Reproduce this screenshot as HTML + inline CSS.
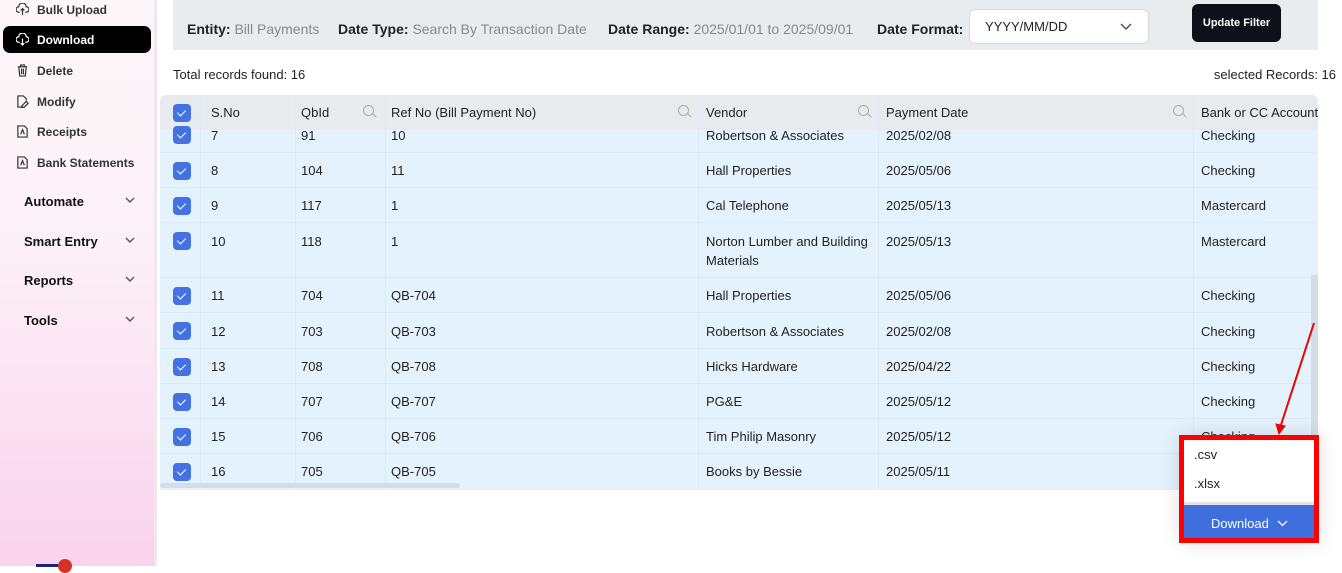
<!DOCTYPE html>
<html><head><style>
*{box-sizing:border-box;margin:0;padding:0}
body{width:1342px;height:566px;overflow:hidden;position:relative;background:#fff;font-family:"Liberation Sans",Arial,sans-serif;font-size:13px;color:#222}
.sb{position:absolute;left:0;top:0;width:157px;height:566px;background:linear-gradient(180deg,#fdf6f9 0%,#fdf2f8 40%,#f9d3ec 100%);border-right:3px solid #f3e6ee}
.nav{position:absolute;left:37px;font-size:12px;font-weight:bold;color:#333}
.ic{position:absolute;left:16px;width:13px;height:13px}
.act{position:absolute;left:3px;top:26px;width:148px;height:27px;background:#000;border-radius:7px}
.grp{position:absolute;left:24px;font-size:13px;font-weight:bold;color:#111}
.chev{position:absolute;left:125px;width:10px;height:6px}
.fb{position:absolute;left:173px;top:0;width:1145px;height:50px;background:#e9ecef}
.fb span{position:absolute;top:21px;font-size:14px}
.fb b{color:#222}
.fb i{font-style:normal;color:#888}
.sel{position:absolute;left:969px;top:9px;width:180px;height:35px;background:#fff;border:1px solid #d8d8d8;border-radius:6px;font-size:13px;padding:9px 15px}
.btn{position:absolute;left:1192px;top:4px;width:89px;height:38px;background:#0e1117;border-radius:6px;color:#fff;font-size:11px;font-weight:bold;text-align:center;line-height:38px}
.tbl{position:absolute;left:160px;top:95px;width:1158px;height:395px;background:#e3f2fd;overflow:hidden;border-radius:6px 6px 0 0}
.hd{position:absolute;left:0;top:0;width:1158px;height:35px;background:#e8ebee}
.row{position:absolute;left:0;width:1158px;border-bottom:1px solid #d9e9f5}
.c{position:absolute;font-size:13px;color:#222;white-space:nowrap}
.cb{position:absolute;left:13px;width:18px;height:18px;background:#4472e3;border-radius:4px}
.cb:after{content:"";position:absolute;left:6px;top:4px;width:4px;height:7px;border:solid #fff;border-width:0 1.5px 1.5px 0;transform:rotate(45deg)}
.vl{position:absolute;top:0;width:1px;height:395px;background:#dde9f3}
.mg{position:absolute;top:10px;width:11px;height:11px;border:1.3px solid #aaa;border-radius:50%}
.mg:after{content:"";position:absolute;left:8px;top:9px;width:5px;height:1.3px;background:#aaa;transform:rotate(45deg)}
</style></head><body>
<div class="sb">
<div class="act"></div>
<svg class="ic" style="top:3px" viewBox="0 0 14 14" fill="none" stroke="#333" stroke-width="1.3"><path d="M4 10H3a3 3 0 010-6 4 4 0 018 0 3 3 0 010 6h-1M7 13V6M5 8l2-2 2 2"/></svg>
<div class="nav" style="top:3px">Bulk Upload</div>
<svg class="ic" style="top:33px" viewBox="0 0 14 14" fill="none" stroke="#fff" stroke-width="1.3"><path d="M4 10H3a3 3 0 010-6 4 4 0 018 0 3 3 0 010 6h-1M7 6v7M5 11l2 2 2-2"/></svg>
<div class="nav" style="top:33px;color:#fff">Download</div>
<svg class="ic" style="top:64px" viewBox="0 0 14 14" fill="none" stroke="#333" stroke-width="1.3"><path d="M2 3h10M5 3V1h4v2M3 3l1 10h6l1-10M6 5v6M8 5v6"/></svg>
<div class="nav" style="top:64px">Delete</div>
<svg class="ic" style="top:95px" viewBox="0 0 14 14" fill="none" stroke="#333" stroke-width="1.3"><path d="M8 13H2V1h6l3 3v2M6 12l5-5 2 2-5 5H6z"/></svg>
<div class="nav" style="top:95px">Modify</div>
<svg class="ic" style="top:125px" viewBox="0 0 14 14" fill="none" stroke="#333" stroke-width="1.3"><path d="M2 1h7l3 3v9H2zM5 10l2-5 2 5"/></svg>
<div class="nav" style="top:125px">Receipts</div>
<svg class="ic" style="top:156px" viewBox="0 0 14 14" fill="none" stroke="#333" stroke-width="1.3"><path d="M2 1h7l3 3v9H2zM5 10l2-5 2 5"/></svg>
<div class="nav" style="top:156px">Bank Statements</div>
<div class="grp" style="top:194px">Automate</div><svg class="chev" style="top:197px" viewBox="0 0 10 6"><path d="M1 1l4 4 4-4" fill="none" stroke="#555" stroke-width="1.4"/></svg>
<div class="grp" style="top:234px">Smart Entry</div><svg class="chev" style="top:237px" viewBox="0 0 10 6"><path d="M1 1l4 4 4-4" fill="none" stroke="#555" stroke-width="1.4"/></svg>
<div class="grp" style="top:273px">Reports</div><svg class="chev" style="top:276px" viewBox="0 0 10 6"><path d="M1 1l4 4 4-4" fill="none" stroke="#555" stroke-width="1.4"/></svg>
<div class="grp" style="top:313px">Tools</div><svg class="chev" style="top:316px" viewBox="0 0 10 6"><path d="M1 1l4 4 4-4" fill="none" stroke="#555" stroke-width="1.4"/></svg>
<div style="position:absolute;left:58px;top:559px;width:14px;height:14px;border-radius:50%;background:#d93025"></div>
<div style="position:absolute;left:36px;top:564px;width:22px;height:3px;background:#1a237e"></div>
</div>
<div class="fb">
<span style="left:14px"><b>Entity:</b> <i>Bill Payments</i></span>
<span style="left:165px"><b>Date Type:</b> <i>Search By Transaction Date</i></span>
<span style="left:435px"><b>Date Range:</b> <i>2025/01/01 to 2025/09/01</i></span>
<span style="left:704px"><b>Date Format:</b></span>
</div>
<div class="sel">YYYY/MM/DD<svg style="position:absolute;right:16px;top:13px" width="12" height="8" viewBox="0 0 12 8"><path d="M1 1l5 5 5-5" fill="none" stroke="#444" stroke-width="1.3"/></svg></div>
<div class="btn">Update Filter</div>
<div style="position:absolute;left:173px;top:67px;font-size:13px">Total records found: 16</div>
<div style="position:absolute;right:6px;top:67px;font-size:13px">selected Records: 16</div>
<div class="tbl">
<div class="hd"></div>
<div class="vl" style="left:40px"></div><div class="vl" style="left:135px"></div><div class="vl" style="left:225px"></div><div class="vl" style="left:538px"></div><div class="vl" style="left:718px"></div><div class="vl" style="left:1033px"></div>
<div class="cb" style="top:9px"></div>
<div class="c" style="left:51px;top:10px">S.No</div>
<div class="c" style="left:141px;top:10px">QbId</div><div class="mg" style="left:203px"></div>
<div class="c" style="left:231px;top:10px">Ref No (Bill Payment No)</div><div class="mg" style="left:518px"></div>
<div class="c" style="left:546px;top:10px">Vendor</div><div class="mg" style="left:698px"></div>
<div class="c" style="left:726px;top:10px">Payment Date</div><div class="mg" style="left:1013px"></div>
<div class="c" style="left:1041px;top:10px">Bank or CC Account</div>
<div class="row" style="top:35px;height:23px"><div class="cb" style="top:-4px"></div><div class="c" style="left:51px;top:-2px">7</div><div class="c" style="left:141px;top:-2px">91</div><div class="c" style="left:231px;top:-2px">10</div><div class="c" style="left:546px;top:-2px">Robertson &amp; Associates</div><div class="c" style="left:726px;top:-2px">2025/02/08</div><div class="c" style="left:1041px;top:-2px">Checking</div></div>
<div class="row" style="top:58px;height:35px"><div class="cb" style="top:9px"></div><div class="c" style="left:51px;top:10px">8</div><div class="c" style="left:141px;top:10px">104</div><div class="c" style="left:231px;top:10px">11</div><div class="c" style="left:546px;top:10px">Hall Properties</div><div class="c" style="left:726px;top:10px">2025/05/06</div><div class="c" style="left:1041px;top:10px">Checking</div></div>
<div class="row" style="top:93px;height:35px"><div class="cb" style="top:9px"></div><div class="c" style="left:51px;top:10px">9</div><div class="c" style="left:141px;top:10px">117</div><div class="c" style="left:231px;top:10px">1</div><div class="c" style="left:546px;top:10px">Cal Telephone</div><div class="c" style="left:726px;top:10px">2025/05/13</div><div class="c" style="left:1041px;top:10px">Mastercard</div></div>
<div class="row" style="top:128px;height:55px"><div class="cb" style="top:9px"></div><div class="c" style="left:51px;top:11px">10</div><div class="c" style="left:141px;top:11px">118</div><div class="c" style="left:231px;top:11px">1</div><div class="c" style="left:546px;top:9px;line-height:19px">Norton Lumber and Building<br>Materials</div><div class="c" style="left:726px;top:11px">2025/05/13</div><div class="c" style="left:1041px;top:11px">Mastercard</div></div>
<div class="row" style="top:183px;height:35px"><div class="cb" style="top:9px"></div><div class="c" style="left:51px;top:10px">11</div><div class="c" style="left:141px;top:10px">704</div><div class="c" style="left:231px;top:10px">QB-704</div><div class="c" style="left:546px;top:10px">Hall Properties</div><div class="c" style="left:726px;top:10px">2025/05/06</div><div class="c" style="left:1041px;top:10px">Checking</div></div>
<div class="row" style="top:218px;height:36px"><div class="cb" style="top:9px"></div><div class="c" style="left:51px;top:11px">12</div><div class="c" style="left:141px;top:11px">703</div><div class="c" style="left:231px;top:11px">QB-703</div><div class="c" style="left:546px;top:11px">Robertson &amp; Associates</div><div class="c" style="left:726px;top:11px">2025/02/08</div><div class="c" style="left:1041px;top:11px">Checking</div></div>
<div class="row" style="top:254px;height:35px"><div class="cb" style="top:9px"></div><div class="c" style="left:51px;top:10px">13</div><div class="c" style="left:141px;top:10px">708</div><div class="c" style="left:231px;top:10px">QB-708</div><div class="c" style="left:546px;top:10px">Hicks Hardware</div><div class="c" style="left:726px;top:10px">2025/04/22</div><div class="c" style="left:1041px;top:10px">Checking</div></div>
<div class="row" style="top:289px;height:35px"><div class="cb" style="top:9px"></div><div class="c" style="left:51px;top:10px">14</div><div class="c" style="left:141px;top:10px">707</div><div class="c" style="left:231px;top:10px">QB-707</div><div class="c" style="left:546px;top:10px">PG&amp;E</div><div class="c" style="left:726px;top:10px">2025/05/12</div><div class="c" style="left:1041px;top:10px">Checking</div></div>
<div class="row" style="top:324px;height:35px"><div class="cb" style="top:9px"></div><div class="c" style="left:51px;top:10px">15</div><div class="c" style="left:141px;top:10px">706</div><div class="c" style="left:231px;top:10px">QB-706</div><div class="c" style="left:546px;top:10px">Tim Philip Masonry</div><div class="c" style="left:726px;top:10px">2025/05/12</div><div class="c" style="left:1041px;top:10px">Checking</div></div>
<div class="row" style="top:359px;height:36px;border:none"><div class="cb" style="top:9px"></div><div class="c" style="left:51px;top:10px">16</div><div class="c" style="left:141px;top:10px">705</div><div class="c" style="left:231px;top:10px">QB-705</div><div class="c" style="left:546px;top:10px">Books by Bessie</div><div class="c" style="left:726px;top:10px">2025/05/11</div></div>
<div style="position:absolute;left:0;top:388px;width:300px;height:5px;background:#d3dde6;border-radius:3px"></div>
<div style="position:absolute;left:1151px;top:180px;width:7px;height:210px;background:#d3dde6"></div>
</div>
<div style="position:absolute;left:1179px;top:435px;width:140px;height:108px;background:#f00;box-shadow:0 0 20px rgba(0,0,0,.12)"></div>
<div style="position:absolute;left:1184px;top:440px;width:130px;height:62px;background:#fff;font-size:13px">
<div style="position:absolute;left:10px;top:7px">.csv</div><div style="position:absolute;left:10px;top:36px">.xlsx</div></div>
<div style="position:absolute;left:1184px;top:502px;width:130px;height:3px;background:#e2e2e2"></div>
<div style="position:absolute;left:1184px;top:505px;width:130px;height:33px;background:#3e6fdc;color:#fff;font-size:13px;line-height:38px"><span style="position:absolute;left:27px;top:0">Download</span><svg style="position:absolute;left:93px;top:15px" width="11" height="7" viewBox="0 0 11 7"><path d="M1 1l4.5 4.5L10 1" fill="none" stroke="#fff" stroke-width="1.3"/></svg></div>
<svg style="position:absolute;left:1270px;top:320px" width="50" height="115"><path d="M44 3L10 108" stroke="#e00" stroke-width="2"/><path d="M6 104L9 114 15 106z" fill="#e00" stroke="#e00"/></svg>
</body></html>
